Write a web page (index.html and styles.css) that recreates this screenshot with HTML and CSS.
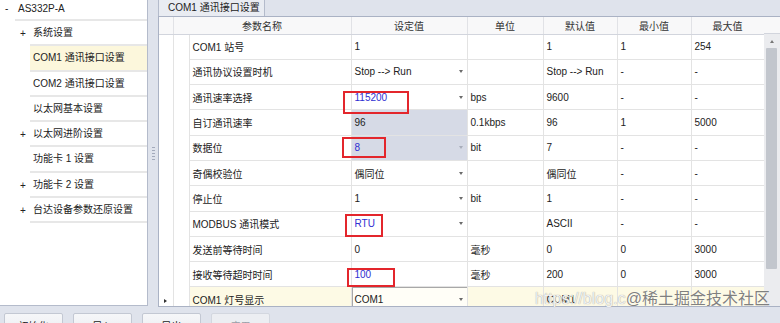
FILE: index.html
```html
<!DOCTYPE html>
<html lang="zh-CN">
<head>
<meta charset="UTF-8">
<title>COM1 通讯接口设置</title>
<link rel="stylesheet" href="styles.css">
</head>
<body>
<div class="window">
  <div class="main">
    <aside class="tree">
      <div class="node root"><span class="toggle">-</span><span class="label">AS332P-A</span></div>
      <div class="node"><span class="toggle">+</span><span class="label">系统设置</span></div>
      <div class="node selected"><span class="toggle"></span><span class="label">COM1 通讯接口设置</span></div>
      <div class="node"><span class="toggle"></span><span class="label">COM2 通讯接口设置</span></div>
      <div class="node"><span class="toggle"></span><span class="label">以太网基本设置</span></div>
      <div class="node"><span class="toggle">+</span><span class="label">以太网进阶设置</span></div>
      <div class="node"><span class="toggle"></span><span class="label">功能卡 1 设置</span></div>
      <div class="node"><span class="toggle">+</span><span class="label">功能卡 2 设置</span></div>
      <div class="node"><span class="toggle">+</span><span class="label">台达设备参数还原设置</span></div>
    </aside>

    <div class="splitter"><span class="grip"></span></div>

    <section class="editor">
      <div class="tabs">
        <div class="tab">COM1 通讯接口设置</div>
      </div>
      <div class="grid">
        <div class="table-box">
          <table class="params">
            <colgroup>
              <col class="c-ind"><col class="c-indent"><col class="c-name"><col class="c-val">
              <col class="c-unit"><col class="c-def"><col class="c-min"><col class="c-max">
            </colgroup>
            <thead>
              <tr>
                <th></th>
                <th colspan="2">参数名称</th>
                <th>设定值</th>
                <th>单位</th>
                <th>默认值</th>
                <th>最小值</th>
                <th>最大值</th>
              </tr>
            </thead>
            <tbody>
              <tr>
                <td class="ind"></td><td class="indent"></td>
                <td>COM1 站号</td>
                <td class="val">1</td>
                <td></td><td>1</td><td>1</td><td>254</td>
              </tr>
              <tr>
                <td class="ind"></td><td class="indent"></td>
                <td>通讯协议设置时机</td>
                <td class="val"><div class="combo"><span>Stop --&gt; Run</span><i class="arrow"></i></div></td>
                <td></td><td>Stop --&gt; Run</td><td>-</td><td>-</td>
              </tr>
              <tr>
                <td class="ind"></td><td class="indent"></td>
                <td>通讯速率选择</td>
                <td class="val"><div class="combo"><span class="changed">115200</span><i class="arrow"></i></div></td>
                <td>bps</td><td>9600</td><td>-</td><td>-</td>
              </tr>
              <tr>
                <td class="ind"></td><td class="indent"></td>
                <td>自订通讯速率</td>
                <td class="val locked">96</td>
                <td>0.1kbps</td><td>96</td><td>1</td><td>5000</td>
              </tr>
              <tr>
                <td class="ind"></td><td class="indent"></td>
                <td>数据位</td>
                <td class="val locked"><div class="combo"><span class="changed">8</span><i class="arrow faded"></i></div></td>
                <td>bit</td><td>7</td><td>-</td><td>-</td>
              </tr>
              <tr>
                <td class="ind"></td><td class="indent"></td>
                <td>奇偶校验位</td>
                <td class="val"><div class="combo"><span>偶同位</span><i class="arrow"></i></div></td>
                <td></td><td>偶同位</td><td>-</td><td>-</td>
              </tr>
              <tr>
                <td class="ind"></td><td class="indent"></td>
                <td>停止位</td>
                <td class="val"><div class="combo"><span>1</span><i class="arrow"></i></div></td>
                <td>bit</td><td>1</td><td>-</td><td>-</td>
              </tr>
              <tr>
                <td class="ind"></td><td class="indent"></td>
                <td>MODBUS 通讯模式</td>
                <td class="val"><div class="combo"><span class="changed">RTU</span><i class="arrow"></i></div></td>
                <td></td><td>ASCII</td><td>-</td><td>-</td>
              </tr>
              <tr>
                <td class="ind"></td><td class="indent"></td>
                <td>发送前等待时间</td>
                <td class="val">0</td>
                <td>毫秒</td><td>0</td><td>0</td><td>3000</td>
              </tr>
              <tr>
                <td class="ind"></td><td class="indent"></td>
                <td>接收等待超时时间</td>
                <td class="val"><span class="changed">100</span></td>
                <td>毫秒</td><td>200</td><td>0</td><td>3000</td>
              </tr>
              <tr class="current">
                <td class="ind"><i class="pointer"></i></td><td class="indent"></td>
                <td>COM1 灯号显示</td>
                <td class="val editing"><div class="combo"><span>COM1</span><i class="arrow"></i></div></td>
                <td></td><td>COM1</td><td></td><td></td>
              </tr>
            </tbody>
          </table>
        </div>
        <div class="vscroll">
          <div class="vs-head"></div>
          <div class="vs-track">
            <div class="vs-up"><i class="up"></i></div>
            <div class="vs-thumb"></div>
          </div>
        </div>
      </div>
    </section>
  </div>

  <div class="buttons">
    <button class="btn">初始化</button>
    <button class="btn">导入</button>
    <button class="btn">导出</button>
    <button class="btn" disabled>应用</button>
  </div>

  <!-- 标注框 -->
  <div class="mark m1"></div>
  <div class="mark m2"></div>
  <div class="mark m3"></div>
  <div class="mark m4"></div>

  <div class="watermark"><span class="wm-url">https://blog.c</span>@稀土掘金技术社区</div>
</div>
</body>
</html>
```

FILE: styles.css
```css
* {
  box-sizing: border-box;
}

html, body {
  margin: 0;
}

body {
  width: 780px;
  height: 323px;
  overflow: hidden;
  background-color: #dfe3ec;
  font-family: "Liberation Sans", "Noto Sans CJK SC", sans-serif;
  font-size: 10px;
  color: #222;
}

.window {
  position: relative;
  height: 323px;
}

.main {
  display: flex;
  height: 307px;
}

/* 左侧树 */
.tree {
  width: 148px;
  height: 306px;
  background-color: #fff;
  border-right: 1px solid #b4bbcb;
  border-bottom: 1px solid #b4bbcb;
}

.node {
  display: flex;
  height: 25.25px;
}

.node.root {
  height: 21px;
}

.toggle {
  width: 30px;
  padding-left: 20px;
  line-height: 25px;
  font-size: 10px;
}

.root .toggle {
  width: 15px;
  padding-left: 5px;
  line-height: 17px;
}

.label {
  flex: 1;
  padding-left: 3px;
  line-height: 23px;
  border-bottom: 2px solid #e7e7e7;
  white-space: nowrap;
}

.root .label {
  line-height: 17px;
}

.node.selected .label {
  background-color: #fcf7dc;
}

/* 分隔条 */
.splitter {
  width: 10px;
  display: flex;
  align-items: center;
  justify-content: center;
}

.grip {
  width: 3px;
  height: 14px;
  background-image: repeating-linear-gradient(to bottom, #a3aabb 0 1px, transparent 1px 3px);
}

/* 右侧编辑区 */
.editor {
  width: 622px;
  display: flex;
  flex-direction: column;
}

.tabs {
  height: 17px;
  display: flex;
  border-bottom: 1px solid #aab2c4;
}

.tab {
  width: 107px;
  height: 16px;
  padding-left: 9px;
  line-height: 15px;
  background-color: #e9ecf2;
  border-left: 1px solid #b4bbcb;
  border-right: 1px solid #b4bbcb;
  white-space: nowrap;
}

.grid {
  display: flex;
  height: 290px;
  background-color: #fff;
  border-left: 1px solid #aab2c4;
  border-bottom: 1px solid #aab2c4;
  overflow: hidden;
}

.table-box {
  width: 605px;
  overflow: hidden;
}

.params {
  width: 605px;
  table-layout: fixed;
  border-collapse: collapse;
}

.c-ind { width: 14px; }
.c-indent { width: 16px; }
.c-name { width: 162px; }
.c-val { width: 116px; }
.c-unit { width: 76px; }
.c-def { width: 74px; }
.c-min { width: 74px; }
.c-max { width: 73px; }

.params th {
  height: 17px;
  padding: 0;
  font-weight: normal;
  text-align: center;
  color: #333;
  background-color: #f8f8f9;
  border-right: 1px solid #e1e2e6;
  border-bottom: 1px solid #d2d5dd;
}

.params td {
  height: 25.3px;
  padding: 0 3px;
  white-space: nowrap;
  overflow: hidden;
  border-right: 1px solid #e3e3e3;
  border-bottom: 1px solid #e3e3e3;
}

.params td.ind,
.params td.indent {
  border-bottom: none;
  padding: 0;
}

.params td.ind {
  text-align: center;
}

.params td.locked {
  background-color: #d6dae6;
}

.params tr.current td {
  background-color: #fdfae5;
}

.params tr.current td.editing {
  background-color: #fffef7;
  box-shadow: inset 1px 1px 0 #a8a8a8;
}

.params tr.current td.ind,
.params tr.current td.indent {
  background-color: #fff;
}

.combo {
  display: flex;
  align-items: center;
  justify-content: space-between;
}

.arrow {
  width: 0;
  height: 0;
  margin-right: 1px;
  border-left: 2.5px solid transparent;
  border-right: 2.5px solid transparent;
  border-top: 3px solid #6a6a6a;
}

.arrow.faded {
  border-top-color: #a8adba;
}

.pointer {
  display: inline-block;
  width: 0;
  height: 0;
  border-top: 2.5px solid transparent;
  border-bottom: 2.5px solid transparent;
  border-left: 3px solid #333;
}

.changed {
  color: #2f2fd2;
}

/* 纵向滚动条 */
.vscroll {
  width: 16px;
  display: flex;
  flex-direction: column;
}

.vs-head {
  height: 17px;
  background-color: #f8f8f9;
  border-bottom: 1px solid #d2d5dd;
}

.vs-track {
  flex: 1;
  background-color: #ebecef;
  padding: 0 3px 0 2px;
}

.vs-up {
  height: 14px;
  display: flex;
  align-items: center;
  justify-content: center;
}

.up {
  width: 0;
  height: 0;
  border-left: 2.5px solid transparent;
  border-right: 2.5px solid transparent;
  border-bottom: 3px solid #777;
}

.vs-thumb {
  height: 221px;
  background-color: #c2c6cd;
  border-radius: 1px;
}

/* 底部按钮 */
.buttons {
  display: flex;
  gap: 10px;
  padding: 6px 0 0 4px;
}

.btn {
  width: 59px;
  height: 24px;
  padding: 0;
  font-family: inherit;
  font-size: 10px;
  color: #222;
  background: linear-gradient(#f6f7f9, #e9ebf0);
  border: 1px solid #c3c8d3;
  border-radius: 2px;
}

.btn:disabled {
  color: #9a9ea8;
  background: #eceef2;
  border-color: #d3d7df;
}

/* 红色标注 */
.mark {
  position: absolute;
  border: 2px solid #e3262c;
}

.m1 { left: 343px; top: 91px; width: 66px; height: 23px; }
.m2 { left: 342px; top: 137px; width: 44px; height: 21px; }
.m3 { left: 345px; top: 214px; width: 38px; height: 23px; }
.m4 { left: 347px; top: 268px; width: 48px; height: 19px; }

.watermark {
  position: absolute;
  left: 535px;
  top: 290px;
  font-size: 16px;
  line-height: 18px;
  color: rgba(105, 105, 105, 0.85);
  text-shadow: 0 0 1px #fff;
  white-space: nowrap;
}

.wm-url {
  color: #f2f2f2;
  text-shadow: 0 0 1px #8d8d8d;
}
```
